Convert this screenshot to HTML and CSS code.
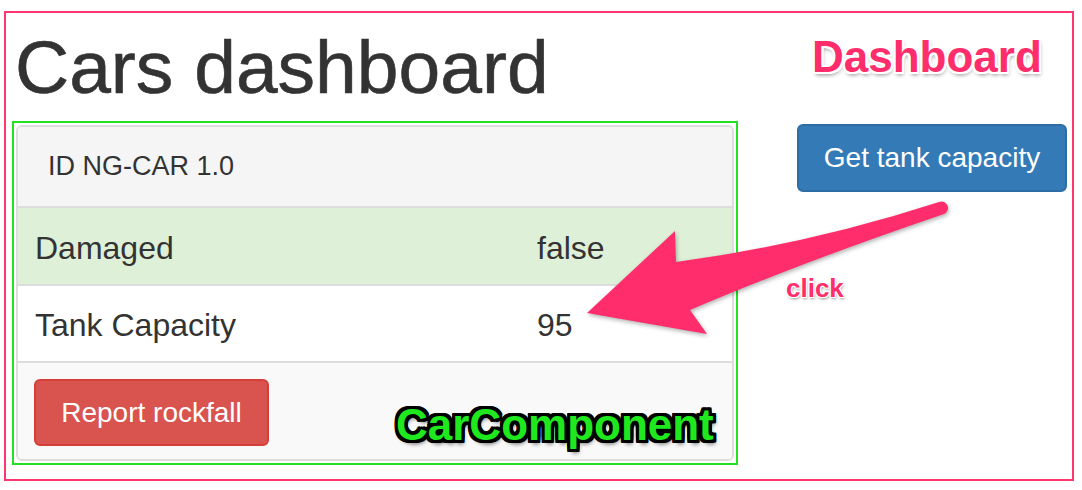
FILE: index.html
```html
<!DOCTYPE html>
<html>
<head>
<meta charset="utf-8">
<title>Cars dashboard</title>
<link rel="stylesheet" href="styles.css">
</head>
<body>
<div class="frame">
  <div class="left-col">
    <h1 class="title">Cars dashboard</h1>
    <div class="component-box">
      <div class="panel">
        <div class="panel-heading">ID NG-CAR 1.0</div>
        <div class="row row-success">
          <span class="cell">Damaged</span>
          <span class="cell">false</span>
        </div>
        <div class="row">
          <span class="cell">Tank Capacity</span>
          <span class="cell">95</span>
        </div>
        <div class="panel-footer">
          <button class="btn btn-danger">Report rockfall</button>
        </div>
      </div>
    </div>
  </div>
  <div class="right-col">
    <button class="btn btn-primary">Get tank capacity</button>
  </div>
</div>

<svg class="arrow" viewBox="0 0 1082 490" width="1082" height="490" xmlns="http://www.w3.org/2000/svg">
  <path d="M587 313 L675 231 L676 262 Q810 244 939 202 A6 6 0 0 1 944 214 Q800 263 690 310 L707 334 Z" fill="#ff2d6b"/>
</svg>

<div class="note note-dashboard">Dashboard</div>
<div class="note note-click">click</div>
<div class="note note-car">CarComponent</div>
</body>
</html>
```

FILE: styles.css
```css
* { box-sizing: border-box; }

html, body {
  margin: 0;
  padding: 0;
  background: #ffffff;
  font-family: "Liberation Sans", Arial, Helvetica, sans-serif;
  color: #333333;
}

body {
  position: relative;
  width: 1082px;
  height: 490px;
  overflow: hidden;
}

.frame {
  margin: 11px 0 0 4px;
  width: 1070px;
  height: 470px;
  border: 2px solid #ff3570;
  display: flex;
}

.left-col {
  margin-left: 6px;
  width: 726px;
  display: flex;
  flex-direction: column;
}

.title {
  margin: 17px 0 17px 3px;
  font-size: 75px;
  line-height: 74px;
  font-weight: 400;
  color: #333333;
  white-space: nowrap;
  -webkit-text-stroke: 0.6px #333333;
}

.component-box {
  width: 726px;
  height: 344px;
  border: 2px solid #22e022;
  padding: 2px;
}

.panel {
  height: 100%;
  border: 2px solid #dddddd;
  border-radius: 6px;
  overflow: hidden;
  display: flex;
  flex-direction: column;
  background: #ffffff;
}

.panel-heading {
  height: 81px;
  padding: 26px 0 0 30px;
  font-size: 27px;
  line-height: 27px;
  background: #f5f5f5;
  border-bottom: 2px solid #dddddd;
}

.row {
  height: 78px;
  padding: 24px 0 0 17px;
  display: grid;
  grid-template-columns: 502px 1fr;
  font-size: 32px;
  line-height: 32px;
  border-bottom: 2px solid #dddddd;
  background: #ffffff;
}

.row + .row {
  height: 77px;
  padding-top: 23px;
}

.row-success {
  background: #dff0d8;
}

.panel-footer {
  flex: 1;
  background: #f9f9f9;
  padding: 16px 0 0 16px;
}

.btn {
  display: flex;
  align-items: center;
  justify-content: center;
  font-family: "Liberation Sans", Arial, Helvetica, sans-serif;
  font-size: 28px;
  color: #ffffff;
  border-radius: 6px;
  border: 2px solid transparent;
  padding: 0;
  cursor: pointer;
}

.btn-danger {
  width: 235px;
  height: 67px;
  background: #d9534f;
  border-color: #d43f3a;
}

.right-col {
  margin-left: 59px;
  padding-top: 111px;
}

.btn-primary {
  width: 270px;
  height: 68px;
  background: #337ab7;
  border-color: #2e6da4;
}

.arrow {
  position: absolute;
  left: 0;
  top: 0;
  pointer-events: none;
  filter: drop-shadow(1px 2px 2px rgba(0, 0, 0, 0.3));
}

.note {
  position: absolute;
  font-family: "Liberation Sans", Arial, Helvetica, sans-serif;
  font-weight: 700;
  line-height: 1;
  white-space: nowrap;
}

.note-dashboard {
  left: 812px;
  top: 35px;
  font-size: 44px;
  color: #ff2d6b;
  text-shadow:
    -2px -2px 0 #fff, 2px -2px 0 #fff, -2px 2px 0 #fff, 2px 2px 0 #fff,
    0 -2px 0 #fff, 0 2px 0 #fff, -2px 0 0 #fff, 2px 0 0 #fff,
    1px 3px 4px rgba(0, 0, 0, 0.45);
}

.note-click {
  left: 786px;
  top: 275px;
  font-size: 26px;
  color: #ff2d6b;
  text-shadow:
    -1px -1px 0 #fff, 1px -1px 0 #fff, -1px 1px 0 #fff, 1px 1px 0 #fff,
    1px 2px 3px rgba(0, 0, 0, 0.45);
}

.note-car {
  left: 396px;
  top: 403px;
  font-size: 44px;
  color: #1fe81f;
  text-shadow:
    -3px -3px 0 #000, 3px -3px 0 #000, -3px 3px 0 #000, 3px 3px 0 #000,
    0 -3px 0 #000, 0 3px 0 #000, -3px 0 0 #000, 3px 0 0 #000,
    -2px -3px 0 #000, 2px -3px 0 #000, -2px 3px 0 #000, 2px 3px 0 #000,
    -3px -2px 0 #000, 3px -2px 0 #000, -3px 2px 0 #000, 3px 2px 0 #000,
    2px 4px 4px rgba(0, 0, 0, 0.6);
}
```
